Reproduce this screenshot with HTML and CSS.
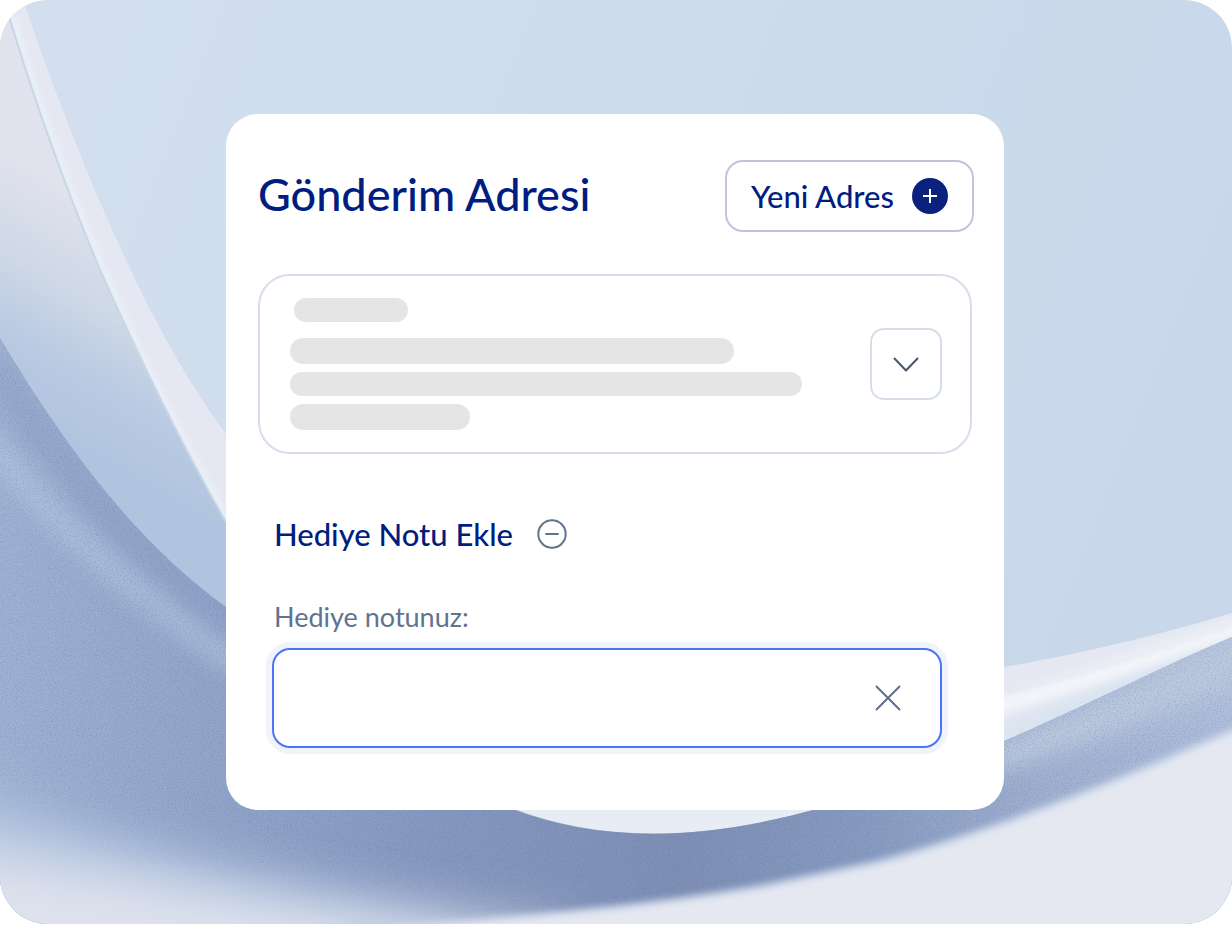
FILE: index.html
```
<!DOCTYPE html>
<html lang="tr">
<head>
    <meta charset="UTF-8">
    <meta name="viewport" content="width=device-width, initial-scale=1">
    <title>Gönderim Adresi</title>
    <link rel="stylesheet" href="styles.css">
</head>
<body>
    <div class="scene">
        <!-- wave background -->
        <svg class="waves" viewBox="0 0 1232 924" preserveAspectRatio="none" aria-hidden="true">
            <defs>
                <linearGradient id="sky" x1="0" y1="0" x2="1" y2="0.3">
                    <stop offset="0" stop-color="#d3dfee"/>
                    <stop offset="1" stop-color="#c8d8ea"/>
                </linearGradient>
                <linearGradient id="fold" gradientUnits="userSpaceOnUse" x1="0" y1="150" x2="-110" y2="340">
                    <stop offset="0" stop-color="#e0e2ed"/>
                    <stop offset="0.4" stop-color="#ced8e6"/>
                    <stop offset="0.7" stop-color="#b9cae2"/>
                    <stop offset="1" stop-color="#b1c4df"/>
                </linearGradient>
                <linearGradient id="deep" gradientUnits="userSpaceOnUse" x1="0" y1="0" x2="1232" y2="0">
                    <stop offset="0" stop-color="#a0b3d4"/>
                    <stop offset="0.18" stop-color="#92a6ca"/>
                    <stop offset="0.35" stop-color="#8799c0"/>
                    <stop offset="0.55" stop-color="#7f90b6"/>
                    <stop offset="0.7" stop-color="#889bc0"/>
                    <stop offset="0.85" stop-color="#a1b1d1"/>
                    <stop offset="1" stop-color="#b1c0dc"/>
                </linearGradient>
                <filter id="soft2" x="-10%" y="-30%" width="120%" height="160%"><feGaussianBlur stdDeviation="2"/></filter>
                <filter id="soft4" x="-10%" y="-30%" width="120%" height="160%"><feGaussianBlur stdDeviation="4"/></filter>
                <filter id="soft12" x="-20%" y="-30%" width="140%" height="160%"><feGaussianBlur stdDeviation="11"/></filter>
                <filter id="soft30" x="-50%" y="-80%" width="200%" height="260%"><feGaussianBlur stdDeviation="28"/></filter>
                <filter id="grain" x="0" y="0" width="100%" height="100%" color-interpolation-filters="sRGB">
                    <feTurbulence type="fractalNoise" baseFrequency="0.85" numOctaves="2" seed="4"/>
                    <feColorMatrix values="0 0 0 0 0.32  0 0 0 0 0.4  0 0 0 0 0.58  2 0 0 0 -0.85"/>
                </filter>
                <clipPath id="innerClip">
                    <path d="M4 0C28 80 60 175 100 270C140 360 180 442 226 522C300 660 400 775 512 808C600 842 700 842 820 808C890 788 940 770 1004 741C1090 704 1160 667 1232 637V924H0V0Z"/>
                </clipPath>
                <clipPath id="deepClip">
                    <path d="M0 338C70 455 140 545 226 607C320 680 400 770 512 809C600 842 700 842 820 808C890 788 940 770 1004 741C1090 704 1160 667 1232 637V924H0Z"/>
                </clipPath>
                <clipPath id="ribbonClip">
                    <path d="M1000 668C1080 655 1160 635 1232 613V637C1160 667 1090 704 1000 743Z"/>
                </clipPath>
            </defs>

            <rect width="1232" height="924" fill="url(#sky)"/>
            <path fill="#e5e8f2" d="M23 0C40 50 68 127 100 202C140 295 180 372 226 434C400 640 700 725 1004 667C1080 654 1160 635 1232 613V924H0V0Z"/>

            <g clip-path="url(#ribbonClip)">
                <path fill="#d6e2f0" d="M1000 730C1090 695 1160 660 1240 622V660L1000 760Z" filter="url(#soft12)"/>
                <path fill="none" stroke="#f2f4f9" stroke-width="18" d="M990 708C1080 682 1160 653 1240 627" filter="url(#soft4)"/>
                <path fill="none" stroke="#e1e4ec" stroke-width="2" d="M1000 694C1080 675 1160 650 1232 625" filter="url(#soft2)"/>
            </g>
            <path fill="#e8edf5" d="M480 800H850V811C700 845 600 845 480 800Z"/>

            <!-- left fold and its lit edge -->
            <path fill="none" stroke="#ebeff7" stroke-width="5" d="M11 10C32 80 64 175 104 270C144 360 184 442 230 522" filter="url(#soft2)"/>
            <g clip-path="url(#innerClip)">
                <rect width="1232" height="924" fill="url(#fold)"/>
            </g>
            <path fill="none" stroke="#c6d7e7" stroke-width="2" d="M7 10C28 80 60 175 100 270C140 360 180 442 226 522"/>

            <!-- dark wave -->
            <g clip-path="url(#deepClip)">
                <rect y="300" width="1232" height="624" fill="url(#deep)"/>
                <path fill="none" stroke="#b6c8e2" stroke-width="26" opacity="0.7" d="M-20 432C70 540 140 595 240 665" filter="url(#soft12)"/>
                <path fill="none" stroke="#8c9fc5" stroke-width="24" opacity="0.5" d="M-10 365C70 480 140 560 240 632" filter="url(#soft12)"/>
                <path fill="#bdcbe0" d="M985 748C1090 704 1160 667 1250 625V682C1160 715 1080 750 985 775Z" filter="url(#soft12)"/>
                <rect y="330" width="1232" height="594" filter="url(#grain)" opacity="0.3"/>
                <path fill="#b2c5e0" d="M-80 775C60 830 200 880 460 932V1000H-80Z" filter="url(#soft30)"/>
                <path fill="#dfe2ed" d="M-80 845C60 860 180 890 400 918L560 935V1050H-80Z" filter="url(#soft30)"/>
                <path fill="#a6bcdc" opacity="0.8" d="M350 926C600 918 760 889 880 860C1010 824 1130 774 1260 714V960H350Z" filter="url(#soft4)"/>
                <path fill="#e5e8f1" d="M200 940C430 924 620 912 760 887L880 862C1010 826 1130 776 1260 718V980H200Z" filter="url(#soft4)"/>
            </g>
        </svg>

        <main class="card">
            <header class="card-header">
                <h1>Gönderim Adresi</h1>
                <button type="button" class="new-btn">
                    Yeni Adres
                    <svg width="36" height="36" viewBox="0 0 36 36" aria-hidden="true">
                        <circle cx="18" cy="18" r="18" fill="#0c217d"/>
                        <path d="M18 11V25M11 18H25" stroke="#fff" stroke-width="2"/>
                    </svg>
                </button>
            </header>

            <section class="address">
                <div class="lines">
                    <div class="line name"></div>
                    <div class="line street"></div>
                    <div class="line district"></div>
                    <div class="line city"></div>
                </div>
                <button type="button" class="open-btn" aria-label="Adres seç">
                    <svg width="28" height="16" viewBox="0 0 28 16" fill="none" stroke="#475569" stroke-width="2" stroke-linecap="round" stroke-linejoin="round" aria-hidden="true">
                        <path d="M2.500 2.500L14 14.500L25.500 2.500"/>
                    </svg>
                </button>
            </section>

            <section class="note">
                <div class="note-title">
                    <h2>Hediye Notu Ekle</h2>
                    <button type="button" class="icon-btn" aria-label="Notu kapat">
                        <svg width="30" height="30" viewBox="0 0 30 30" fill="none" stroke="#60738f" stroke-width="2" stroke-linecap="round" aria-hidden="true">
                            <circle cx="15" cy="15" r="13.7"/>
                            <path d="M9 15H21"/>
                        </svg>
                    </button>
                </div>
                <label for="gift-note">Hediye notunuz:</label>
                <div class="field">
                    <input type="text" id="gift-note">
                    <button type="button" class="icon-btn" aria-label="Temizle">
                        <svg width="28" height="28" viewBox="0 0 28 28" fill="none" stroke="#5b6f8d" stroke-width="2" stroke-linecap="round" aria-hidden="true">
                            <path d="M2.500 2.500L25.500 25.500M25.500 2.500L2.500 25.500"/>
                        </svg>
                    </button>
                </div>
            </section>
        </main>
    </div>
</body>
</html>
```
FILE: styles.css
```
*{
    box-sizing: border-box;
}
body{
    margin: 0;
    background-color: white;
    font-family: Lato, "Noto Sans", sans-serif;
    color: #001e82;
}
h1, h2{
    margin: 0;
    font-weight: 500;
}
button{
    font-family: inherit;
    color: inherit;
    cursor: pointer;
}
svg{
    display: block;
}
.scene{
    position: relative;
    display: flex;
    justify-content: center;
    padding: 114px 18px 114px 16px;
    border-radius: 48px;
    overflow: hidden;
}
.waves{
    position: absolute;
    inset: 0;
    width: 100%;
    height: 100%;
}
.card{
    position: relative;
    width: 100%;
    max-width: 778px;
    padding: 46px 30px 62px 32px;
    background-color: white;
    border-radius: 32px;
}
.card-header{
    display: flex;
    align-items: center;
    justify-content: space-between;
    gap: 16px;
}
h1{
    padding-bottom: 4px;
    font-size: 45px;
    line-height: 56px;
}
.new-btn{
    display: flex;
    align-items: center;
    gap: 18px;
    height: 72px;
    padding: 0 24px;
    background-color: white;
    border: 2px solid #c1c5dc;
    border-radius: 18px;
    font-size: 31px;
    font-weight: 500;
    white-space: nowrap;
}
.address{
    display: flex;
    align-items: center;
    justify-content: space-between;
    gap: 24px;
    margin: 42px 2px 0 0;
    padding: 22px 28px 22px 30px;
    border: 2px solid #d6dfe9;
    border-radius: 32px;
}
.lines{
    display: flex;
    flex-direction: column;
    gap: 8px;
    flex: 1;
}
.line{
    height: 26px;
    max-width: 100%;
    background-color: #e5e5e5;
    border-radius: 13px;
}
.name{
    width: 114px;
    height: 24px;
    margin: 0 0 8px 4px;
}
.street{
    width: 444px;
}
.district{
    width: 512px;
    height: 24px;
}
.city{
    width: 180px;
}
.open-btn{
    display: flex;
    align-items: center;
    justify-content: center;
    width: 72px;
    height: 72px;
    background-color: white;
    border: 2px solid #d6dfe9;
    border-radius: 14px;
}
.note{
    margin: 60px 32px 0 14px;
}
.note-title{
    display: flex;
    align-items: center;
    gap: 24px;
    padding-left: 2px;
}
h2{
    font-size: 31px;
    line-height: 40px;
}
.icon-btn{
    padding: 0;
    background: none;
    border: 0;
}
label{
    display: block;
    margin: 46px 0 14px 2px;
    font-size: 27px;
    line-height: 34px;
    color: #60738f;
}
.field{
    display: flex;
    align-items: center;
    height: 100px;
    padding: 0 38px 0 24px;
    background-color: white;
    border: 2px solid #4b75f8;
    border-radius: 18px;
    box-shadow: 0 0 0 6px #f0f3fa;
}
.field input{
    flex: 1;
    min-width: 0;
    height: 60px;
    border: 0;
    outline: none;
    background: none;
    font: inherit;
    font-size: 27px;
    color: inherit;
}
```
